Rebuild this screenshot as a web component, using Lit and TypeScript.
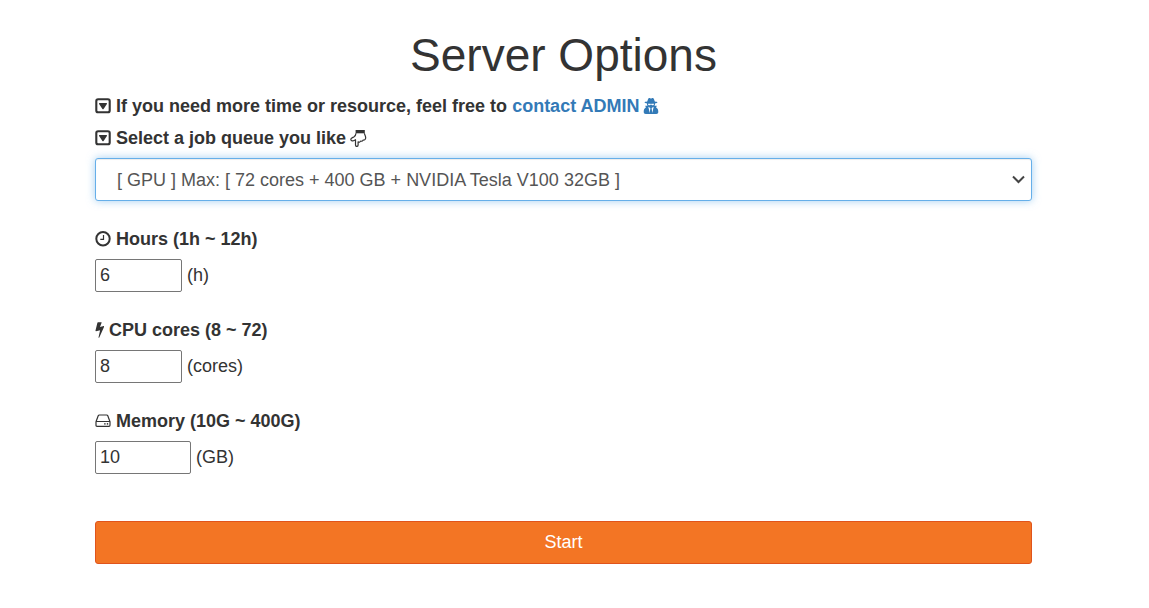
import { LitElement, html, css, svg } from "lit";
import { customElement, property } from "lit/decorators.js";

const shapes: Record<string, { width: number; body: unknown }> = {
  caret: {
    width: 16,
    body: svg`<rect x="1.3" y="1.3" width="13.4" height="12.900" rx="1.800" fill="none" stroke="currentColor" stroke-width="2.100"/>
      <path d="M4.400 5.100h7.200q.7.3.3 1L8.600 10.900q-.6.700-1.200 0L4.100 6.100q-.4-.7.3-1z"/>`,
  },
  hand: {
    width: 17,
    body: svg`<path fill="#333" d="M5.600 0h9.200v3.300H5.600z"/>
      <path d="M6 3.200C5.900 5 5.200 6 3.800 6.900 2.800 7.500.8 7.900.8 9.300c0 1.500 1.500 1.900 2.600 1.500.8-.3 1.400-.7 2.100-1.100V15c0 1.900 2.600 1.900 2.600 0v-3.200c1 .6 2.100.3 2.500-.7 1 .4 2.100 0 2.400-1 1.600.2 2.700-.7 2.700-2.400 0-1.800-1.100-2.700-1.300-4.400" fill="none" stroke="currentColor" stroke-width="1.200" stroke-linejoin="round"/>`,
  },
  agent: {
    width: 16,
    body: svg`<path d="M4.200 3.500 5.200.7C5.600-.2 6.500-.2 7.200.3c.5.3 1.100.3 1.600 0C9.500-.2 10.400-.2 10.800.7l1 2.800c1.500.2 2.600.5 2.600.9 0 .4-1 .8-2.400 1 .1.900-.1 1.700-.5 2.400h2.300l-.7 1.800c1.400.7 2.200 2 2.200 4.400 0 1.200-.8 2-2 2H2.700c-1.200 0-2-.8-2-2 0-2.400.8-3.700 2.200-4.400L2.200 7.800h2.300c-.4-.7-.6-1.500-.5-2.400-1.400-.2-2.400-.6-2.400-1 0-.4 1.100-.7 2.600-.9z"/>
      <path fill="#fff" d="M5 5.700h2.400l.6.400.6-.4H11c-.1 1.200-.7 1.600-1.500 1.500-.7 0-1-.4-1.500-.9-.5.500-.8.9-1.500.9-.8.100-1.400-.3-1.500-1.500zM5.300 8.800 7.400 9.900 6.700 15zM10.700 8.800 8.600 9.900 9.300 15z"/>`,
  },
  clock: {
    width: 16,
    body: svg`<circle cx="8" cy="7.700" r="6.700" fill="none" stroke="currentColor" stroke-width="2"/>
      <path d="M8.500 4V8.400H5.300" fill="none" stroke="currentColor" stroke-width="1.200"/>`,
  },
  bolt: {
    width: 9,
    body: svg`<path d="M3 .2h3.300q.5.100.3.600L5 4.900l3.800-.9q.6 0 .4.600L4.300 15.500q-.6.500-.8-.1L5.100 8.200 1 9.200q-.6 0-.5-.6L2.400.7Q2.500.2 3 .2z"/>`,
  },
  drive: {
    width: 16,
    body: svg`<path d="M1 8.700 3.200 2.800q.3-.8 1.200-.8h7.200q.9 0 1.200.8L15 8.700v3.600q0 1-1 1H2q-1 0-1-1V8.700zM1.200 8.500h13.600" fill="none" stroke="currentColor" stroke-width="1.200" stroke-linejoin="round"/>
      <circle cx="9.900" cy="10.900" r=".8"/><circle cx="12.500" cy="10.900" r=".8"/>`,
  },
};

@customElement("glyph-icon")
class GlyphIcon extends LitElement {
  static styles = css`
    :host { display: inline-flex; flex: none; }
    .glyph { display: block; fill: currentColor; }
  `;
  @property() name = "caret";
  render() {
    const s = shapes[this.name];
    return html`<svg class="glyph" aria-hidden="true" width=${s.width} height="18" viewBox="0 -1 ${s.width} 18">${s.body}</svg>`;
  }
}

const fields = [
  { id: "hours", icon: "clock", label: "Hours (1h ~ 12h)", value: 6, min: 1, max: 12, unit: "(h)", size: "short" },
  { id: "cores", icon: "bolt", label: "CPU cores (8 ~ 72)", value: 8, min: 8, max: 72, unit: "(cores)", size: "short" },
  { id: "memory", icon: "drive", label: "Memory (10G ~ 400G)", value: 10, min: 10, max: 400, unit: "(GB)", size: "long" },
];

@customElement("app-root")
class AppRoot extends LitElement {
  static styles = css`
    :host {
      display: block;
      background: #fff;
      color: #333;
      font: 18px/26px "Liberation Sans", Arial, sans-serif;
    }
    .page { padding: 30px 117px 44px 95px; }
    .title { margin: 0 0 13px; font-size: 46px; line-height: 50px; font-weight: 400; text-align: center; }
    .form { display: flex; flex-direction: column; }
    .line { display: flex; align-items: center; gap: 5px; font-weight: 700; }
    .note { margin: 0 0 6px; }
    .phrase { display: inline-flex; align-items: center; gap: 4px; }
    .link { color: #337ab7; text-decoration: none; }
    .picker { display: grid; align-items: center; margin-top: 7px; }
    .queue {
      grid-area: 1 / 1;
      width: 100%;
      height: 43px;
      padding: 0 40px 0 21px;
      border: 1px solid #66afe9;
      border-radius: 3px;
      outline: 0;
      appearance: none;
      background: #fff;
      color: #555;
      font: inherit;
      box-shadow: inset 0 1px 1px rgba(0, 0, 0, 0.075), 0 0 8px rgba(102, 175, 233, 0.6);
    }
    .chevron { grid-area: 1 / 1; justify-self: end; margin-right: 7px; pointer-events: none; }
    .field { margin-top: 25px; }
    .entry { display: flex; align-items: flex-start; gap: 5px; margin-top: 7px; line-height: 32px; }
    .number {
      box-sizing: border-box;
      height: 33px;
      padding: 0 4px;
      border: 1px solid #767676;
      border-radius: 2px;
      background: #fff;
      color: #333;
      font: inherit;
    }
    .short { width: 87px; }
    .long { width: 96px; }
    .start {
      height: 43px;
      margin-top: 47px;
      padding: 0 12px 2px;
      border: 1px solid #e0541c;
      border-radius: 3px;
      background: #f37524;
      color: #fff;
      font: inherit;
      cursor: pointer;
    }
  `;

  render() {
    return html`
      <main class="page">
        <h1 class="title">Server Options</h1>
        <form class="form">
          <p class="line note">
            <glyph-icon name="caret"></glyph-icon>
            <span>If you need more time or resource, feel free to
              <a class="link phrase" href="#admin">contact ADMIN<glyph-icon name="agent"></glyph-icon></a></span>
          </p>
          <label class="line" for="queue">
            <glyph-icon name="caret"></glyph-icon>
            <span class="phrase">Select a job queue you like<glyph-icon name="hand"></glyph-icon></span>
          </label>
          <div class="picker">
            <select class="queue" id="queue">
              <option>[ GPU ] Max: [ 72 cores + 400 GB + NVIDIA Tesla V100 32GB ]</option>
            </select>
            <svg class="chevron" aria-hidden="true" width="13" height="9" viewBox="0 0 13 9">
              <path d="M1 1.500 6.500 7 12 1.500" fill="none" stroke="#444" stroke-width="2" />
            </svg>
          </div>
          ${fields.map(
            (f) => html`
              <div class="field">
                <label class="line" for=${f.id}><glyph-icon name=${f.icon}></glyph-icon><span>${f.label}</span></label>
                <div class="entry">
                  <input class="number ${f.size}" id=${f.id} type="number" min=${f.min} max=${f.max} .value=${String(f.value)} />
                  <span>${f.unit}</span>
                </div>
              </div>
            `
          )}
          <button class="start" type="button">Start</button>
        </form>
      </main>
    `;
  }
}
